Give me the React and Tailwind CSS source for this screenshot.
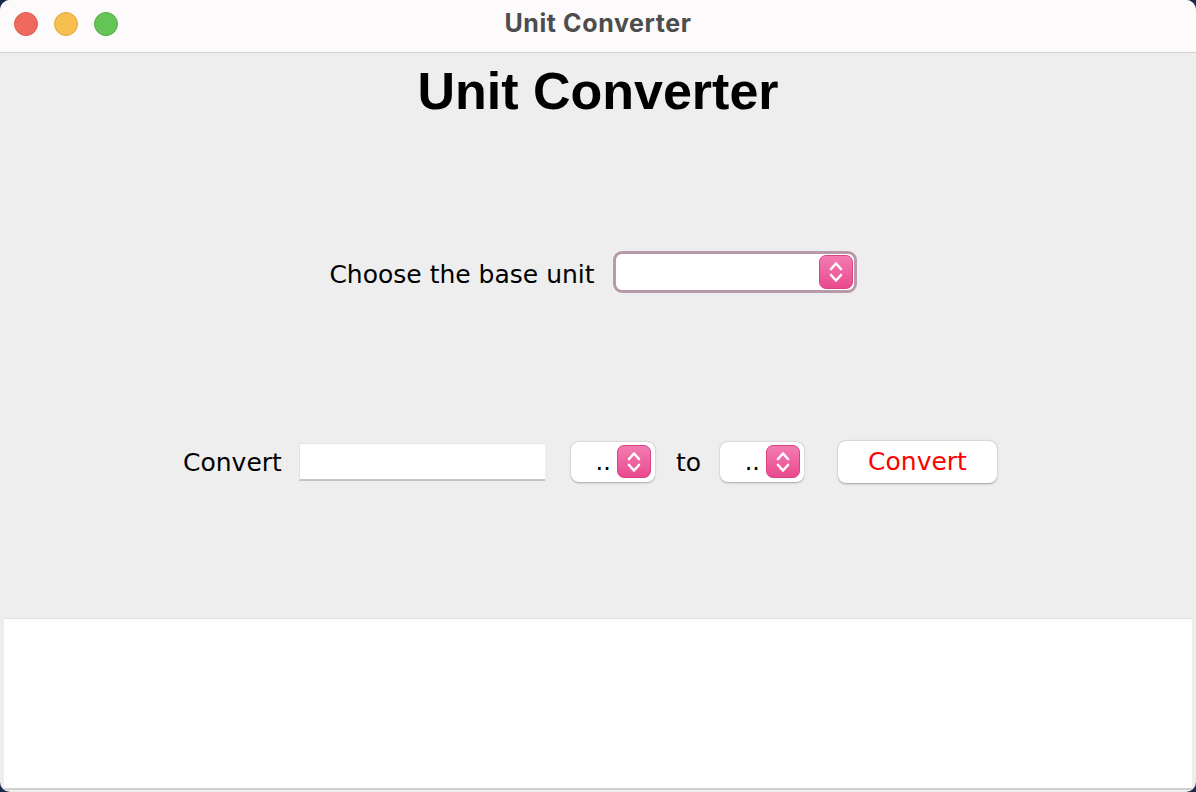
import { useState } from "react"

const SANS = { fontFamily: '"DejaVu Sans", "Noto Sans", sans-serif' }

function Chevrons({ size = 26 }) {
  return (
    <svg width={size} height={size} viewBox="0 0 26 26" fill="none" stroke="white" strokeWidth="2.6" strokeLinecap="round" strokeLinejoin="round">
      <path d="M8 10 L13 4.5 L18 10" />
      <path d="M8 16 L13 21.5 L18 16" />
    </svg>
  )
}

function PinkArrows({ className = "" }) {
  return (
    <span className={`grid place-items-center rounded-[7px] border border-[#d9437f] bg-gradient-to-b from-[#f37bb2] to-[#e9488e] ${className}`}>
      <Chevrons />
    </span>
  )
}

function SmallCombo({ value, onChange }) {
  return (
    <button
      onClick={onChange}
      className="flex h-[40px] w-[84px] items-center justify-end gap-[6px] rounded-[8px] bg-white pr-[4px] shadow-[0_0.5px_2px_rgba(0,0,0,0.3)]"
    >
      <span className="text-[24px] leading-none text-black" style={SANS}>{value}</span>
      <PinkArrows className="h-[33px] w-[34px]" />
    </button>
  )
}

export default function App() {
  const [amount, setAmount] = useState("")
  const [output, setOutput] = useState("")

  return (
    <div className="h-[792px] w-[1196px] bg-[#1b2a4c]">
      <div className="flex h-full flex-col overflow-hidden rounded-[10px] bg-[#eeeeee]">
        {/* title bar */}
        <div className="grid h-[53px] shrink-0 grid-cols-[1fr_auto_1fr] items-center border-b border-[#d2d0d1] bg-[#fcfafb]">
          <div className="flex items-center gap-[16px] pb-[5px] pl-[14px]">
            <span className="h-[24px] w-[24px] rounded-full border border-[#de5a4f] bg-[#ee6a5f]" />
            <span className="h-[24px] w-[24px] rounded-full border border-[#e0a93f] bg-[#f6bf50]" />
            <span className="h-[24px] w-[24px] rounded-full border border-[#52ad45] bg-[#62c555]" />
          </div>
          <div className="pb-[5px] text-[25px] font-bold tracking-[0.6px] text-[#4d4d4d]" style={{ fontFamily: "Inter, 'Liberation Sans', sans-serif" }}>
            Unit Converter
          </div>
          <div />
        </div>

        {/* heading */}
        <h1
          className="mt-[12px] text-center text-[52px] font-bold leading-none text-black"
          style={{ fontFamily: '"Liberation Sans", Arial, sans-serif' }}
        >
          Unit Converter
        </h1>

        {/* base unit row */}
        <div className="mt-[134px] flex items-center justify-center gap-[18px] pr-[10px]">
          <span className="mt-[5px] text-[25px] text-black" style={SANS}>Choose the base unit</span>
          <button className="flex h-[42px] w-[244px] items-center justify-end rounded-[9px] border-[3px] border-[#b99aab] bg-white pr-[1px]">
            <PinkArrows className="h-[34px] w-[34px]" />
          </button>
        </div>

        {/* convert row */}
        <div className="mt-[147px] flex items-center justify-center pr-[16px]">
          <span className="mt-[3px] text-[25px] text-black" style={SANS}>Convert</span>
          <input
            value={amount}
            onChange={(e) => setAmount(e.target.value)}
            className="ml-[17px] h-[38px] w-[246px] border-t border-l border-[#e4e4e4] border-b-2 border-b-[#c4c4c4] bg-white px-2 text-[22px] outline-none"
            style={SANS}
          />
          <div className="ml-[26px]">
            <SmallCombo value=".." />
          </div>
          <span className="ml-[21px] mt-[3px] text-[25px] text-black" style={SANS}>to</span>
          <div className="ml-[19px]">
            <SmallCombo value=".." />
          </div>
          <button
            onClick={() => setOutput(amount)}
            className="ml-[34px] h-[42px] w-[159px] rounded-[8px] bg-white text-[25px] text-[#ff0000] shadow-[0_0.5px_2px_rgba(0,0,0,0.35)]"
            style={SANS}
          >
            Convert
          </button>
        </div>

        <div className="flex-1" />

        {/* output area */}
        <div className="mx-[4px] mb-[2px] h-[172px] shrink-0 border-t border-[#e0e0e0] border-b-2 border-b-[#cfcfcf] bg-white">
          <textarea
            value={output}
            onChange={(e) => setOutput(e.target.value)}
            className="h-full w-full resize-none bg-transparent p-2 outline-none"
            style={SANS}
          />
        </div>
      </div>
    </div>
  )
}
